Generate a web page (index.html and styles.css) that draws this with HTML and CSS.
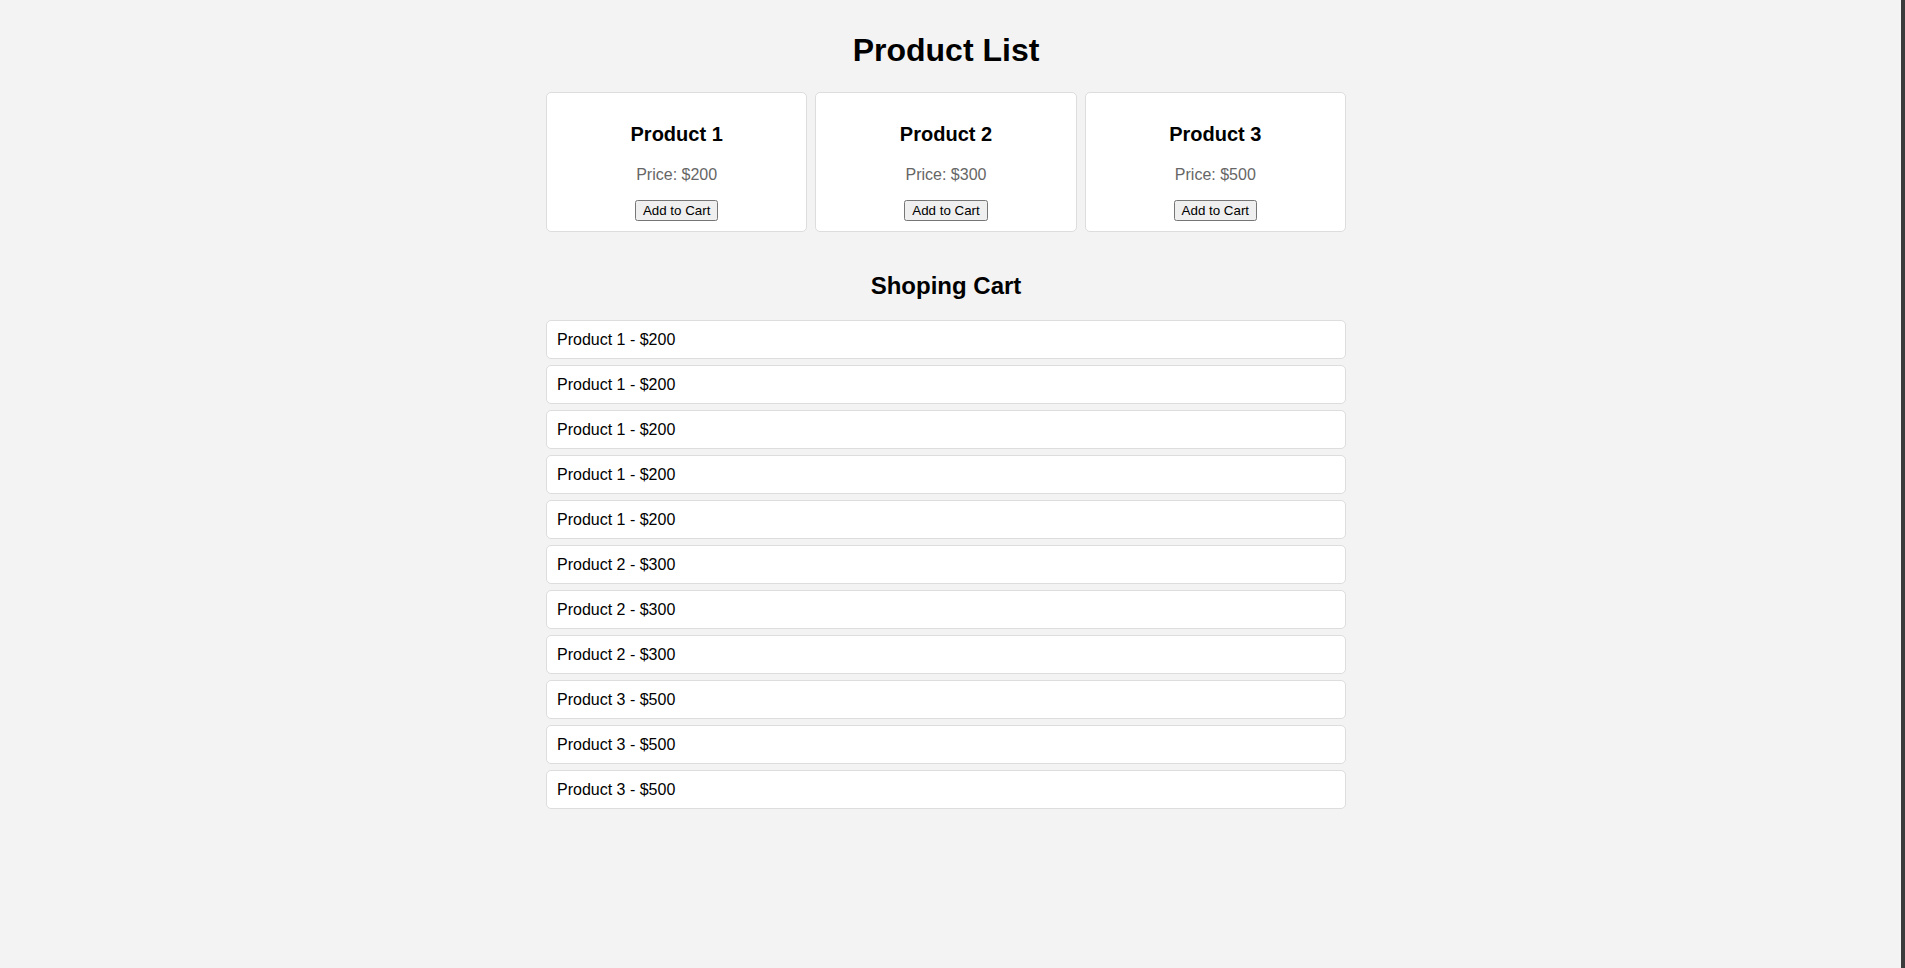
FILE: index.html
```html
<!DOCTYPE html>
<html lang="en">
<head>
<meta charset="utf-8">
<title>Product List</title>
<link rel="stylesheet" href="styles.css">
</head>
<body>
<div class="window">
  <main class="page">
    <div class="container">
      <h1 class="page-title">Product List</h1>
      <div class="products">
        <div class="card">
          <h3 class="card-title">Product 1</h3>
          <p class="price">Price: $200</p>
          <div class="actions"><button class="add-btn" type="button">Add to Cart</button></div>
        </div>
        <div class="card">
          <h3 class="card-title">Product 2</h3>
          <p class="price">Price: $300</p>
          <div class="actions"><button class="add-btn" type="button">Add to Cart</button></div>
        </div>
        <div class="card">
          <h3 class="card-title">Product 3</h3>
          <p class="price">Price: $500</p>
          <div class="actions"><button class="add-btn" type="button">Add to Cart</button></div>
        </div>
      </div>
      <h2 class="cart-title">Shoping Cart</h2>
      <ul class="cart">
        <li class="cart-item">Product 1 - $200</li>
        <li class="cart-item">Product 1 - $200</li>
        <li class="cart-item">Product 1 - $200</li>
        <li class="cart-item">Product 1 - $200</li>
        <li class="cart-item">Product 1 - $200</li>
        <li class="cart-item">Product 2 - $300</li>
        <li class="cart-item">Product 2 - $300</li>
        <li class="cart-item">Product 2 - $300</li>
        <li class="cart-item">Product 3 - $500</li>
        <li class="cart-item">Product 3 - $500</li>
        <li class="cart-item">Product 3 - $500</li>
      </ul>
    </div>
  </main>
  <div class="edge"></div>
</div>
</body>
</html>
```

FILE: styles.css
```css
html, body {
  margin: 0;
  padding: 0;
  background: #f3f3f3;
}

body {
  font-family: "Liberation Sans", Arial, sans-serif;
  font-size: 16px;
  color: #000;
}

.window {
  display: flex;
  min-height: 100vh;
}

.page {
  flex: 1;
  padding: 0 9px 0 0;
}

.edge {
  width: 4px;
  background: #3b3b3b;
}

.container {
  width: 800px;
  margin: 0 auto;
}

.page-title {
  margin: 32px 0 23px;
  font-size: 32px;
  font-weight: bold;
  text-align: center;
}

.products {
  display: flex;
  gap: 8px;
}

.card {
  flex: 1;
  background: #fff;
  border: 1px solid #ddd;
  border-radius: 5px;
  padding: 10px;
  text-align: center;
}

.card-title {
  margin: 20px 0 20px;
  font-size: 20px;
  font-weight: bold;
}

.price {
  margin: 0 0 16px;
  color: #666;
}

.actions {
  height: 21px;
  line-height: 21px;
}

.add-btn {
  font-family: "Liberation Sans", Arial, sans-serif;
  font-size: 13.333px;
  vertical-align: top;
}

.cart-title {
  margin: 40px 0 20px;
  font-size: 24px;
  font-weight: bold;
  text-align: center;
}

.cart {
  list-style: none;
  margin: 0;
  padding: 0;
}

.cart-item {
  background: #fff;
  border: 1px solid #ddd;
  border-radius: 5px;
  padding: 9px 10px;
  margin-bottom: 6px;
  line-height: 19px;
}
```
